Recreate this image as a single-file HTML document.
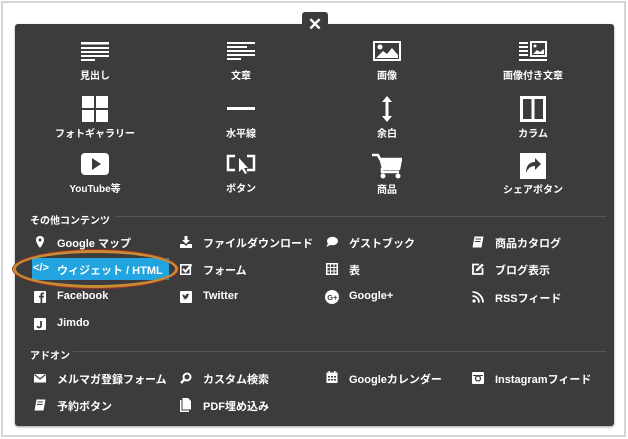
<!DOCTYPE html>
<html><head><meta charset="utf-8"><style>
*{margin:0;padding:0;box-sizing:border-box}
body{width:628px;height:439px;background:#fff;position:relative;overflow:hidden;font-family:"Liberation Sans","Noto Sans CJK JP",sans-serif;color:#fff}
.frame{position:absolute;left:1px;top:1px;width:625px;height:436px;border:2px solid #d4d4d4}
.panel{position:absolute;left:15px;top:24px;width:599px;height:402px;background:#3c3c3c;border-radius:3px;box-shadow:0 1px 2px rgba(0,0,0,.4)}
.close{position:absolute;left:302px;top:12px;width:26px;height:24px;background:#3c3c3c;border-radius:3px 3px 0 0;font-size:17px;font-weight:bold;text-align:center;line-height:26px}
.g{position:absolute;width:120px;text-align:center;font-size:10px;font-weight:bold}
.g svg{display:block;margin:0 auto}
.sec{position:absolute;left:30px;font-size:10px;font-weight:bold}
.line{position:absolute;height:1px;background:#555;right:22px}
.it{position:absolute;font-size:11px;font-weight:bold;white-space:nowrap}
.ic{position:absolute;width:12px;height:12px}
</style></head><body>
<div class="frame"></div>
<div class="panel"></div>
<div class="close">✕</div>

<!-- grid -->
<div class="g" style="left:35px;top:41px"><svg width="28" height="20"><g fill="#fff"><rect x="0" y="1" width="28" height="2.5"/><rect x="0" y="6" width="28" height="2"/><rect x="0" y="10" width="28" height="2"/><rect x="0" y="14" width="28" height="2"/><rect x="0" y="18" width="14" height="2"/></g></svg><div style="margin-top:6px">見出し</div></div>
<div class="g" style="left:181px;top:41px"><svg width="28" height="20"><g fill="#fff"><rect x="0" y="1" width="28" height="2"/><rect x="0" y="5" width="20" height="2"/><rect x="0" y="9" width="28" height="2"/><rect x="0" y="13" width="28" height="2"/><rect x="0" y="17" width="14" height="2"/></g></svg><div style="margin-top:6px">文章</div></div>
<div class="g" style="left:327px;top:41px"><svg width="28" height="20"><rect x="1" y="1" width="26" height="18" fill="none" stroke="#fff" stroke-width="2"/><circle cx="7" cy="6" r="2.5" fill="#fff"/><path d="M3 17 L10 10 L14 13 L19 7 L25 14 V17Z" fill="#fff"/></svg><div style="margin-top:6px">画像</div></div>
<div class="g" style="left:473px;top:41px"><svg width="28" height="20"><g fill="#fff"><rect x="0" y="1" width="9" height="2"/><rect x="0" y="5" width="9" height="2"/><rect x="0" y="9" width="9" height="2"/><rect x="0" y="13" width="9" height="2"/><rect x="0" y="18" width="28" height="2"/></g><rect x="12" y="1" width="15" height="14" fill="none" stroke="#fff" stroke-width="2"/><path d="M14 13 L18 9 L21 11 L25 8 V13Z" fill="#fff"/><circle cx="16" cy="5" r="1.5" fill="#fff"/></svg><div style="margin-top:6px">画像付き文章</div></div>

<div class="g" style="left:35px;top:96px"><svg width="26" height="26"><g fill="#fff"><rect x="0" y="0" width="12" height="12"/><rect x="14" y="0" width="12" height="12"/><rect x="0" y="14" width="12" height="12"/><rect x="14" y="14" width="12" height="12"/></g></svg><div style="margin-top:3px">フォトギャラリー</div></div>
<div class="g" style="left:181px;top:96px"><svg width="28" height="26"><rect x="0" y="11" width="28" height="3" fill="#fff"/></svg><div style="margin-top:3px">水平線</div></div>
<div class="g" style="left:327px;top:96px"><svg width="14" height="26"><path d="M7 0 L12 6 H8.5 V20 H12 L7 26 L2 20 H5.5 V6 H2Z" fill="#fff"/></svg><div style="margin-top:3px">余白</div></div>
<div class="g" style="left:473px;top:96px"><svg width="26" height="26"><rect x="1.5" y="1.5" width="23" height="23" fill="none" stroke="#fff" stroke-width="3"/><rect x="11.5" y="1" width="3" height="24" fill="#fff"/></svg><div style="margin-top:3px">カラム</div></div>

<div class="g" style="left:35px;top:153px"><svg width="28" height="22"><rect x="0" y="0" width="28" height="22" rx="4" fill="#fff"/><path d="M11 5 L20 11 L11 17Z" fill="#3c3c3c"/></svg><div style="margin-top:5px">YouTube等</div></div>
<div class="g" style="left:181px;top:153px"><svg width="30" height="22"><path d="M9 3 H2 V17 H9 M21 3 H28 V17 H21" fill="none" stroke="#fff" stroke-width="2.5"/><path d="M13 5 V19 L16 16 L19 21 L21 20 L18 15 H22Z" fill="#fff"/></svg><div style="margin-top:5px">ボタン</div></div>
<div class="g" style="left:327px;top:153px"><svg width="30" height="26"><path d="M0 2 H6 L8 6 H29 L27 16 H10 L10 19 H27" fill="none" stroke="#fff" stroke-width="2.5"/><path d="M7 5 H29 L27 16 H10Z" fill="#fff"/><circle cx="11" cy="23" r="2.5" fill="#fff"/><circle cx="26" cy="23" r="2.5" fill="#fff"/></svg><div style="margin-top:2px">商品</div></div>
<div class="g" style="left:473px;top:153px"><svg width="26" height="26"><rect x="0" y="0" width="26" height="26" fill="#fff"/><path d="M6 20 C6 12 10 9 15 9 V5 L21 11 L15 17 V13 C11 13 8 15 6 20Z" fill="#3c3c3c"/></svg><div style="margin-top:2px">シェアボタン</div></div>

<div class="sec" style="top:212px">その他コンテンツ</div>
<div class="line" style="left:115px;top:216px;right:22px"></div>

<!-- highlight -->
<div style="position:absolute;left:32px;top:258px;width:137px;height:22px;background:#21a4e0"></div>
<div style="position:absolute;left:13px;top:250px;width:165px;height:38px;border:3px solid #c98a34;border-radius:50%;box-shadow:0 0 0 1px #a03020"></div>

<!-- col1 -->
<svg class="ic" style="left:34px;top:236px" viewBox="0 0 12 12"><path d="M6 0 C3 0 2 2 2 4 C2 7 6 12 6 12 C6 12 10 7 10 4 C10 2 9 0 6 0Z" fill="#fff"/><circle cx="6" cy="4" r="1.5" fill="#3c3c3c"/></svg>
<div class="it" style="left:57px;top:235px">Google マップ</div>
<div class="it" style="left:33px;top:262px;color:#fff;font-weight:bold">&lt;/&gt;</div>
<div class="it" style="left:57px;top:262px">ウィジェット / HTML</div>
<svg class="ic" style="left:34px;top:291px" viewBox="0 0 12 12"><rect width="12" height="12" rx="1" fill="#fff"/><path d="M6.5 12 V6.5 H5 V4.8 H6.5 V3.6 C6.5 2 7.4 1.5 8.8 1.5 H10 V3.2 H9 C8.4 3.2 8.3 3.5 8.3 4 V4.8 H10 L9.8 6.5 H8.3 V12Z" fill="#3c3c3c"/></svg>
<div class="it" style="left:57px;top:290px">Facebook</div>
<svg class="ic" style="left:34px;top:318px" viewBox="0 0 12 12"><rect width="12" height="12" rx="1" fill="#fff"/><path d="M7 3 V8 C7 9 6 9.5 5 9.5 C4 9.5 3.5 9 3.5 8" fill="none" stroke="#3c3c3c" stroke-width="1.8"/></svg>
<div class="it" style="left:57px;top:317px">Jimdo</div>

<!-- col2 -->
<svg class="ic" style="left:180px;top:236px" viewBox="0 0 12 12"><path d="M4.5 0 H7.5 V4 H10 L6 8 L2 4 H4.5Z M0 8 H4 L6 10 L8 8 H12 V12 H0Z" fill="#fff"/></svg>
<div class="it" style="left:203px;top:235px">ファイルダウンロード</div>
<svg class="ic" style="left:180px;top:263px" viewBox="0 0 12 12"><rect x="0.8" y="1.8" width="9.5" height="9.5" fill="none" stroke="#fff" stroke-width="1.6"/><path d="M3 6 L5.5 8.5 L11.5 1.5" fill="none" stroke="#fff" stroke-width="2"/></svg>
<div class="it" style="left:203px;top:262px">フォーム</div>
<svg class="ic" style="left:180px;top:291px" viewBox="0 0 12 12"><rect width="12" height="12" rx="1" fill="#fff"/><path d="M2.5 8.5 C5 9 8 7.5 8.5 4 L9.5 3 L8.5 3.2 C8 2.5 7 2.4 6.4 3 C5.8 3.5 5.8 4.2 6 4.7 C4.5 4.6 3.4 4 2.6 3 C2.2 4 2.6 5 3.3 5.4 L2.8 5.3 C2.9 6 3.3 6.5 4 6.7 L3.4 6.8 C3.7 7.4 4.2 7.6 4.8 7.7 C4.1 8.2 3.3 8.5 2.5 8.5Z" fill="#3c3c3c"/></svg>
<div class="it" style="left:203px;top:290px">Twitter</div>

<!-- col3 -->
<svg class="ic" style="left:326px;top:236px" viewBox="0 0 12 12"><ellipse cx="6.5" cy="5" rx="5.5" ry="4.3" fill="#fff"/><path d="M2 7 L0.5 11 L5 8.5Z" fill="#fff"/></svg>
<div class="it" style="left:349px;top:235px">ゲストブック</div>
<svg class="ic" style="left:326px;top:263px" viewBox="0 0 12 12"><rect width="12" height="12" fill="#fff"/><g fill="#3c3c3c"><rect x="1.5" y="1.5" width="2.5" height="2.5"/><rect x="5" y="1.5" width="2.5" height="2.5"/><rect x="8.5" y="1.5" width="2" height="2.5"/><rect x="1.5" y="5" width="2.5" height="2.5"/><rect x="5" y="5" width="2.5" height="2.5"/><rect x="8.5" y="5" width="2" height="2.5"/><rect x="1.5" y="8.5" width="2.5" height="2"/><rect x="5" y="8.5" width="2.5" height="2"/><rect x="8.5" y="8.5" width="2" height="2"/></g></svg>
<div class="it" style="left:349px;top:262px">表</div>
<svg class="ic" style="left:325px;top:290px;width:14px;height:14px" viewBox="0 0 14 14"><circle cx="7" cy="7" r="7" fill="#fff"/><text x="2.3" y="10" font-size="7.5" font-weight="bold" fill="#3c3c3c" font-family="Liberation Sans">G+</text></svg>
<div class="it" style="left:349px;top:290px">Google+</div>

<!-- col4 -->
<svg class="ic" style="left:472px;top:236px" viewBox="0 0 12 12"><path d="M2.5 0.5 H11.5 L9.5 11.5 H0.5Z" fill="#fff"/><path d="M3.5 3 H9 M3 5.5 H8.5" stroke="#3c3c3c" stroke-width="1"/></svg>
<div class="it" style="left:495px;top:235px">商品カタログ</div>
<svg class="ic" style="left:472px;top:263px" viewBox="0 0 12 12"><path d="M7 1.5 H1 V11 H10.5 V5" fill="none" stroke="#fff" stroke-width="1.8"/><path d="M10 0.5 L11.8 2.3 L6 8 L3.8 8.3 L4.1 6.2Z" fill="#fff"/></svg>
<div class="it" style="left:495px;top:262px">ブログ表示</div>
<svg class="ic" style="left:472px;top:291px" viewBox="0 0 12 12"><circle cx="2" cy="10" r="1.6" fill="#fff"/><path d="M0.5 5 A6.5 6.5 0 0 1 7 11.5 M0.5 1 A10.5 10.5 0 0 1 11 11.5" fill="none" stroke="#fff" stroke-width="1.8"/></svg>
<div class="it" style="left:495px;top:290px">RSSフィード</div>

<div class="sec" style="top:347px">アドオン</div>
<div class="line" style="left:73px;top:351px"></div>

<svg class="ic" style="left:34px;top:372px" viewBox="0 0 12 12"><rect x="0" y="2" width="12" height="8.5" fill="#fff"/><path d="M0.5 2.5 L6 7 L11.5 2.5" fill="none" stroke="#3c3c3c" stroke-width="1.2"/></svg>
<div class="it" style="left:57px;top:371px">メルマガ登録フォーム</div>
<svg class="ic" style="left:180px;top:372px" viewBox="0 0 12 12"><circle cx="7" cy="5" r="3.5" fill="none" stroke="#fff" stroke-width="2"/><path d="M4.5 7.5 L1 11" stroke="#fff" stroke-width="2.5"/></svg>
<div class="it" style="left:203px;top:371px">カスタム検索</div>
<svg class="ic" style="left:326px;top:371px" viewBox="0 0 12 12"><rect x="0.5" y="1.5" width="11" height="10.5" fill="#fff"/><rect x="2.5" y="0" width="1.5" height="3" fill="#fff"/><rect x="8" y="0" width="1.5" height="3" fill="#fff"/><g fill="#3c3c3c"><rect x="2" y="5" width="2" height="1.5"/><rect x="5" y="5" width="2" height="1.5"/><rect x="8" y="5" width="2" height="1.5"/><rect x="2" y="8" width="2" height="1.5"/><rect x="5" y="8" width="2" height="1.5"/><rect x="8" y="8" width="2" height="1.5"/></g></svg>
<div class="it" style="left:349px;top:371px">Googleカレンダー</div>
<svg class="ic" style="left:472px;top:372px" viewBox="0 0 12 12"><rect width="12" height="12" rx="1" fill="#fff"/><circle cx="6" cy="6.5" r="2.5" fill="none" stroke="#3c3c3c" stroke-width="1.3"/><rect x="1" y="3" width="10" height="1" fill="#3c3c3c"/></svg>
<div class="it" style="left:495px;top:371px">Instagramフィード</div>

<svg class="ic" style="left:34px;top:399px" viewBox="0 0 12 12"><path d="M2.5 0.5 H11.5 L9.5 11.5 H0.5Z" fill="#fff"/><path d="M3.5 3 H9 M3 5.5 H8.5" stroke="#3c3c3c" stroke-width="1"/></svg>
<div class="it" style="left:57px;top:398px">予約ボタン</div>
<svg class="ic" style="left:180px;top:398px;height:14px" viewBox="0 0 12 14"><path d="M0 2 H1.5 V12.5 H9 V14 H0Z" fill="#fff"/><path d="M2.5 0 H8 L11 3 V11.5 H2.5Z" fill="#fff"/></svg>
<div class="it" style="left:203px;top:398px">PDF埋め込み</div>
</body></html>
